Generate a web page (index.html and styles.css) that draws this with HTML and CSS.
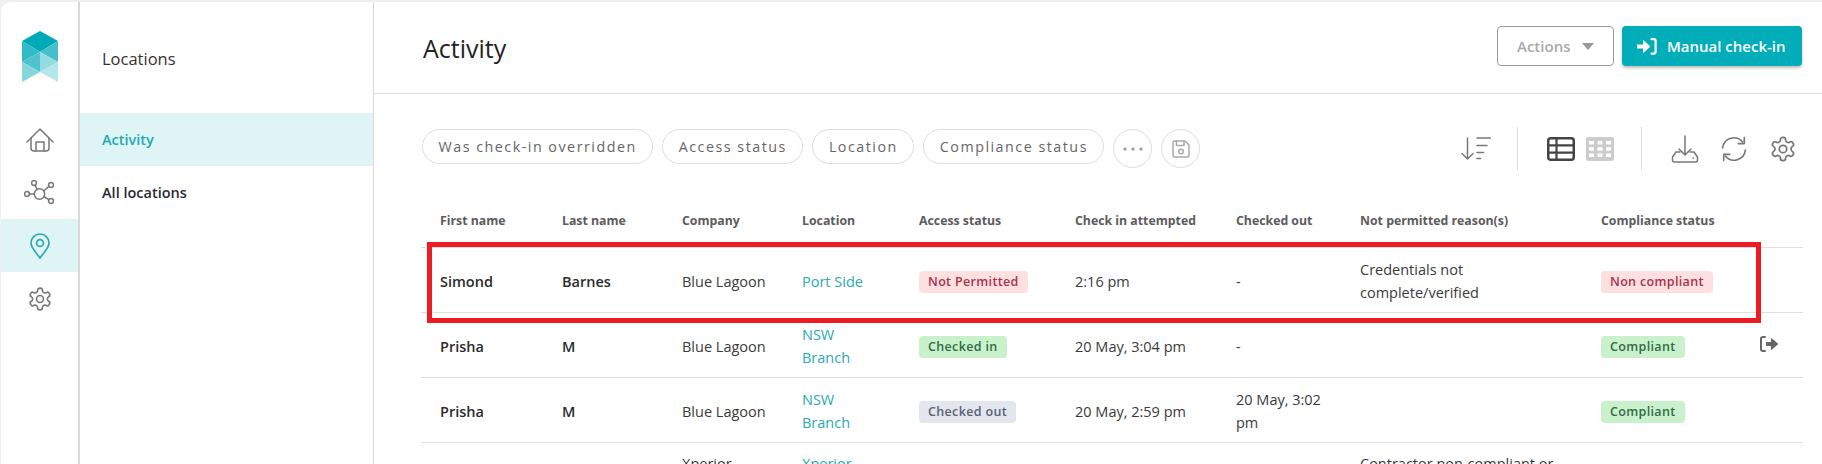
FILE: index.html
```html
<!DOCTYPE html>
<html lang="en">
<head>
  <meta charset="UTF-8">
  <title>Activity</title>
  <link rel="stylesheet" href="styles.css">
</head>
<body>

  <svg class="defs" width="0" height="0">
    <symbol id="gear" viewBox="0 0 24 24">
      <path d="M12.22 2h-.44a2 2 0 0 0-2 2v.18a2 2 0 0 1-1 1.73l-.43.25a2 2 0 0 1-2 0l-.15-.08a2 2 0 0 0-2.73.73l-.22.38a2 2 0 0 0 .73 2.73l.15.1a2 2 0 0 1 1 1.72v.51a2 2 0 0 1-1 1.74l-.15.09a2 2 0 0 0-.73 2.73l.22.38a2 2 0 0 0 2.73.73l.15-.08a2 2 0 0 1 2 0l.43.25a2 2 0 0 1 1 1.73V20a2 2 0 0 0 2 2h.44a2 2 0 0 0 2-2v-.18a2 2 0 0 1 1-1.73l.43-.25a2 2 0 0 1 2 0l.15.08a2 2 0 0 0 2.73-.73l.22-.39a2 2 0 0 0-.73-2.73l-.15-.08a2 2 0 0 1-1-1.74v-.5a2 2 0 0 1 1-1.74l.15-.09a2 2 0 0 0 .73-2.73l-.22-.38a2 2 0 0 0-2.73-.73l-.15.08a2 2 0 0 1-2 0l-.43-.25a2 2 0 0 1-1-1.73V4a2 2 0 0 0-2-2z"/>
      <circle cx="12" cy="12" r="3.2"/>
    </symbol>
  </svg>

  <div class="app">
    <nav class="rail">
      <svg class="logo" width="36" height="51" viewBox="0 0 36 51">
        <polygon fill="#00a9b8" points="18,0 36,10 18,21 0,10"/>
        <polygon fill="#2fbcc7" points="0,10 18,21 0,31"/>
        <polygon fill="#45c0ca" points="36,10 18,21 36,31"/>
        <polygon fill="#4fc4ce" points="18,21 18,41 0,31"/>
        <polygon fill="#93dbe1" points="18,21 36,31 18,41"/>
        <polygon fill="#86d6dd" points="0,31 18,41 0,51"/>
        <polygon fill="#b3e6ea" points="36,31 18,41 36,51"/>
      </svg>

      <a class="rail-item">
        <svg class="line-icon" width="28" height="26" viewBox="0 0 28 26">
          <path d="M1 15 14 2l13 13"/>
          <path d="M5 11v10a3 3 0 0 0 3 3h12a3 3 0 0 0 3-3V11"/>
          <path d="M10 24v-9h8v9"/>
        </svg>
      </a>
      <a class="rail-item">
        <svg class="line-icon" width="32" height="26" viewBox="0 0 32 26">
          <circle cx="15.5" cy="14" r="5.2"/>
          <circle cx="10" cy="3" r="2.4"/>
          <circle cx="27" cy="5" r="2.4"/>
          <circle cx="27" cy="21" r="2.4"/>
          <circle cx="3" cy="14" r="2.4"/>
          <path d="M11 5.2 13.300 9.500M24.900 6.300 19.800 11M24.900 19.700 19.800 16.500M5.400 14h4.900"/>
        </svg>
      </a>
      <a class="rail-item active">
        <svg class="line-icon" width="20" height="26" viewBox="0 0 20 26">
          <path d="M10 25C6 19 1 15 1 10a9 9 0 0 1 18 0c0 5-5 9-9 15z"/>
          <circle cx="10" cy="10" r="3.400"/>
        </svg>
      </a>
      <a class="rail-item">
        <svg class="line-icon gear" width="26" height="26"><use href="#gear"/></svg>
      </a>
    </nav>

    <aside class="subnav">
      <div class="subnav-title">Locations</div>
      <a class="subnav-item active">Activity</a>
      <a class="subnav-item">All locations</a>
    </aside>

    <main class="main">
      <header class="page-head">
        <h1>Activity</h1>
        <div class="head-buttons">
          <button class="btn-actions">Actions <span class="caret"></span></button>
          <button class="btn-primary">
            <svg width="20" height="17" viewBox="0 0 20 17">
              <path fill="#fff" d="M0 6.500h6V2.800c0-.5.600-.8 1-.4l5.800 5.500c.3.300.3.800 0 1.100L7 14.500c-.4.400-1 .1-1-.4v-3.600H0z"/>
              <path fill="none" stroke="#fff" stroke-width="2.200" stroke-linecap="round" d="M14.500 1.200h2.300c1 0 1.800.8 1.800 1.800v10.800c0 1-.8 1.800-1.800 1.800h-2.300"/>
            </svg>
            Manual check-in
          </button>
        </div>
      </header>

      <div class="toolbar">
        <div class="chips">
          <span class="chip">Was check-in overridden</span>
          <span class="chip">Access status</span>
          <span class="chip">Location</span>
          <span class="chip">Compliance status</span>
          <span class="round-btn">
            <svg width="20" height="4" viewBox="0 0 20 4" fill="#999">
              <circle cx="2" cy="2" r="1.600"/><circle cx="10" cy="2" r="1.600"/><circle cx="18" cy="2" r="1.600"/>
            </svg>
          </span>
          <span class="round-btn">
            <svg class="line-icon light" width="18" height="18" viewBox="0 0 18 18">
              <path d="M1 2.500A1.500 1.500 0 0 1 2.500 1h10.500L17 5v10.500a1.500 1.500 0 0 1-1.500 1.500h-13A1.500 1.500 0 0 1 1 15.500z"/>
              <path d="M4.500 1v4.500h7.500V1"/>
              <circle cx="9" cy="11.500" r="2.300"/>
            </svg>
          </span>
        </div>

        <div class="tools">
          <div class="tool-group sort-group">
            <svg class="line-icon" width="30" height="23" viewBox="0 0 30 23">
              <path d="M6.500 1v21M1 16.500 6.500 22l5.500-5.500"/>
              <path d="M16 1h13.500M16 8.500h10M16 15.500h6.500M16 21.500h3.500"/>
            </svg>
          </div>
          <div class="tool-group view-group">
            <svg width="28" height="24" viewBox="0 0 28 24">
              <rect x="1.250" y="1.250" width="25.500" height="21.500" rx="2.500" fill="#fff" stroke="#444" stroke-width="2.500"/>
              <path d="M1 8.300h26M1 15.600h26M9.500 1v22" stroke="#444" stroke-width="2.200" fill="none"/>
            </svg>
            <svg width="28" height="24" viewBox="0 0 28 24">
              <rect width="28" height="24" rx="2.500" fill="#ccc"/>
              <path fill="#fff" d="M3 4h5v3.500H3zM11.500 4h5v3.500h-5zM20 4h5v3.500h-5zM3 10.300h5v3.500H3zM11.500 10.300h5v3.500h-5zM20 10.300h5v3.500h-5zM3 16.600h5v3.500H3zM11.500 16.600h5v3.500h-5zM20 16.600h5v3.500h-5z"/>
            </svg>
          </div>
          <div class="tool-group action-group">
            <svg class="line-icon" width="28" height="28" viewBox="0 0 28 28">
              <path d="M14 1v19M8 14l6 6 6-6"/>
              <path d="M9 17H5l-3.500 5v3a2 2 0 0 0 2 2h21a2 2 0 0 0 2-2v-3L23 17h-4"/>
              <path d="M22 23h.5"/>
            </svg>
            <svg class="line-icon" width="26" height="26" viewBox="0 0 24 24">
              <path d="M1.500 11A10.500 10.500 0 0 1 20 5.500M22.500 13A10.500 10.500 0 0 1 4 18.500"/>
              <path d="M21.500 1.500V7H16M2.500 22.500V17H8"/>
            </svg>
            <svg class="line-icon gear" width="28" height="28"><use href="#gear"/></svg>
          </div>
        </div>
      </div>

      <table class="activity">
        <thead>
          <tr>
            <th>First name</th>
            <th>Last name</th>
            <th>Company</th>
            <th>Location</th>
            <th>Access status</th>
            <th>Check in attempted</th>
            <th>Checked out</th>
            <th>Not permitted reason(s)</th>
            <th>Compliance status</th>
            <th></th>
          </tr>
        </thead>
        <tbody>
          <tr>
            <td class="name">Simond</td>
            <td class="name">Barnes</td>
            <td>Blue Lagoon</td>
            <td class="loc"><a class="link">Port Side</a></td>
            <td><span class="badge bad">Not Permitted</span></td>
            <td>2:16 pm</td>
            <td>-</td>
            <td>Credentials not complete/verified</td>
            <td><span class="badge bad">Non compliant</span></td>
            <td></td>
          </tr>
          <tr>
            <td class="name">Prisha</td>
            <td class="name">M</td>
            <td>Blue Lagoon</td>
            <td class="loc"><a class="link">NSW Branch</a></td>
            <td><span class="badge good">Checked in</span></td>
            <td>20 May, 3:04 pm</td>
            <td>-</td>
            <td></td>
            <td><span class="badge good">Compliant</span></td>
            <td>
              <svg class="row-icon" width="19" height="16" viewBox="0 0 19 16">
                <path fill="none" stroke="#666" stroke-width="2" stroke-linecap="round" d="M5 1H3a2 2 0 0 0-2 2v10a2 2 0 0 0 2 2h2"/>
                <path fill="#666" d="M6 6h5V2.800c0-.5.600-.8 1-.4l5.800 5.100c.3.300.3.700 0 1L12 13.600c-.4.400-1 .1-1-.4V10H6z"/>
              </svg>
            </td>
          </tr>
          <tr>
            <td class="name">Prisha</td>
            <td class="name">M</td>
            <td>Blue Lagoon</td>
            <td class="loc"><a class="link">NSW Branch</a></td>
            <td><span class="badge muted">Checked out</span></td>
            <td>20 May, 2:59 pm</td>
            <td>20 May, 3:02 pm</td>
            <td></td>
            <td><span class="badge good">Compliant</span></td>
            <td></td>
          </tr>
          <tr class="cut-row">
            <td></td>
            <td></td>
            <td>Xperior</td>
            <td><a class="link">Xperior</a></td>
            <td></td>
            <td></td>
            <td></td>
            <td>Contractor non-compliant or</td>
            <td></td>
            <td></td>
          </tr>
        </tbody>
      </table>

      <div class="highlight"></div>
    </main>
  </div>

</body>
</html>
```

FILE: styles.css
```css
* {
  box-sizing: border-box;
}

body {
  margin: 0;
  height: 100vh;
  overflow: hidden;
  background-color: #efefef;
  font-family: 'Open Sans', sans-serif;
  color: #333;
}

.defs {
  position: absolute;
}

.app {
  display: flex;
  height: calc(100vh - 2px);
  margin: 2px 0 0 1px;
  background-color: #fff;
  border-radius: 9px 0 0 0;
  overflow: hidden;
}

/* icon rail */
.rail {
  width: 79px;
  flex-shrink: 0;
  border-right: 2px solid #d9d9d9;
  display: flex;
  flex-direction: column;
}

.logo {
  margin: 29px 0 31px 21px;
}

.rail-item {
  height: 53px;
  display: flex;
  align-items: center;
  justify-content: center;
}

.rail-item.active {
  background-color: #def4f5;
}

.line-icon {
  fill: none;
  stroke: #777;
  stroke-width: 1.5;
  stroke-linecap: round;
  stroke-linejoin: round;
}

.line-icon.light {
  stroke: #aaa;
}

.rail-item.active .line-icon {
  stroke: #2aa9b5;
  stroke-width: 1.7;
}

/* second column */
.subnav {
  width: 294px;
  flex-shrink: 0;
  border-right: 1px solid #d9d9d9;
}

.subnav-title {
  height: 111px;
  padding: 46px 0 0 22px;
  font-size: 16.5px;
  line-height: 22px;
  color: #333;
}

.subnav-item {
  display: block;
  height: 53px;
  line-height: 53px;
  padding-left: 22px;
  font-size: 14.5px;
  font-weight: 600;
  color: #2a2a35;
}

.subnav-item.active {
  background-color: #def4f5;
  color: #1fa9b6;
}

/* main column */
.main {
  flex: 1;
  position: relative;
  min-width: 0;
}

.page-head {
  height: 92px;
  border-bottom: 1px solid #dedede;
  padding: 24px 20px 0 49px;
  display: flex;
  justify-content: space-between;
  align-items: flex-start;
}

h1 {
  margin: 0;
  font-size: 25px;
  line-height: 44px;
  font-weight: 400;
  color: #222;
}

.head-buttons {
  display: flex;
  gap: 8px;
}

.btn-actions,
.btn-primary {
  height: 40px;
  border-radius: 4px;
  font-family: 'Open Sans', sans-serif;
  font-size: 15px;
  font-weight: 600;
  display: flex;
  align-items: center;
}

.btn-actions {
  width: 117px;
  padding: 0 0 0 19px;
  background-color: #fff;
  border: 1px solid #999;
  color: #aaa;
}

.caret {
  margin-left: 12px;
  border-left: 6px solid transparent;
  border-right: 6px solid transparent;
  border-top: 7px solid #999;
}

.btn-primary {
  width: 180px;
  padding: 0 0 0 15px;
  gap: 10px;
  background-color: #00adb9;
  border: none;
  color: #fff;
  white-space: nowrap;
  box-shadow: 0 2px 3px rgba(0, 0, 0, 0.25);
}

.toolbar {
  display: flex;
  justify-content: space-between;
  padding: 33px 0 0 48px;
  height: 76px;
}

.chips {
  display: flex;
  gap: 9px;
  padding-top: 2px;
  align-items: flex-start;
}

.chip {
  height: 35px;
  line-height: 33px;
  padding: 0 15.5px;
  border: 1px solid #ddd;
  border-radius: 18px;
  font-size: 14.3px;
  letter-spacing: 1.5px;
  color: #666;
  white-space: nowrap;
}

.round-btn {
  width: 39px;
  height: 39px;
  border: 1px solid #ddd;
  border-radius: 50%;
  display: flex;
  align-items: center;
  justify-content: center;
}

.tools {
  display: flex;
  height: 43px;
  padding-right: 25px;
}

.tool-group {
  display: flex;
  align-items: center;
}

.sort-group {
  padding-right: 26px;
}

.view-group {
  gap: 11px;
  padding: 0 27px 0 29px;
  border-left: 1px solid #ddd;
}

.action-group {
  gap: 22px;
  padding-left: 29px;
  border-left: 1px solid #ddd;
}

/* table */
.activity {
  border-collapse: collapse;
  table-layout: fixed;
  width: 1382px;
  margin: 25px 0 0 47px;
  font-size: 14.5px;
}

.activity th {
  height: 52px;
  padding: 0 0 0 19px;
  border-bottom: 1px solid #e0e0e0;
  text-align: left;
  font-size: 12.3px;
  font-weight: 700;
  color: #5c5c5c;
  white-space: nowrap;
}

.activity td {
  height: 65px;
  padding: 3px 10px 0 19px;
  border-bottom: 1px solid #e0e0e0;
  line-height: 23px;
  color: #3a3a3a;
}

.activity th:nth-child(1) { width: 122px; }
.activity th:nth-child(2) { width: 120px; }
.activity th:nth-child(3) { width: 120px; }
.activity th:nth-child(4) { width: 117px; }
.activity th:nth-child(5) { width: 156px; }
.activity th:nth-child(6) { width: 161px; }
.activity th:nth-child(7) { width: 124px; }
.activity th:nth-child(8) { width: 241px; }
.activity th:nth-child(9) { width: 159px; }

.activity td.name {
  font-weight: 600;
  color: #2b2b2b;
}

.activity td.loc {
  padding-right: 30px;
}

.link {
  color: #2aa9b5;
}

.cut-row td {
  vertical-align: top;
  padding-top: 9px;
}

.badge {
  display: inline-block;
  height: 22px;
  line-height: 22px;
  padding: 0 9px;
  border-radius: 4px;
  font-size: 12.5px;
  font-weight: 600;
  letter-spacing: 0.35px;
  white-space: nowrap;
}

.badge.bad {
  background-color: #fde0df;
  color: #a8324f;
}

.badge.good {
  background-color: #c9f2cc;
  color: #2f6b45;
}

.badge.muted {
  background-color: #e2e6ee;
  color: #5a6272;
}

.row-icon {
  display: block;
  margin-top: -5px;
}

/* red annotation box over the first row */
.highlight {
  position: absolute;
  left: 53px;
  top: 240px;
  width: 1334px;
  height: 81px;
  border: 5px solid #ed1c24;
}
```
